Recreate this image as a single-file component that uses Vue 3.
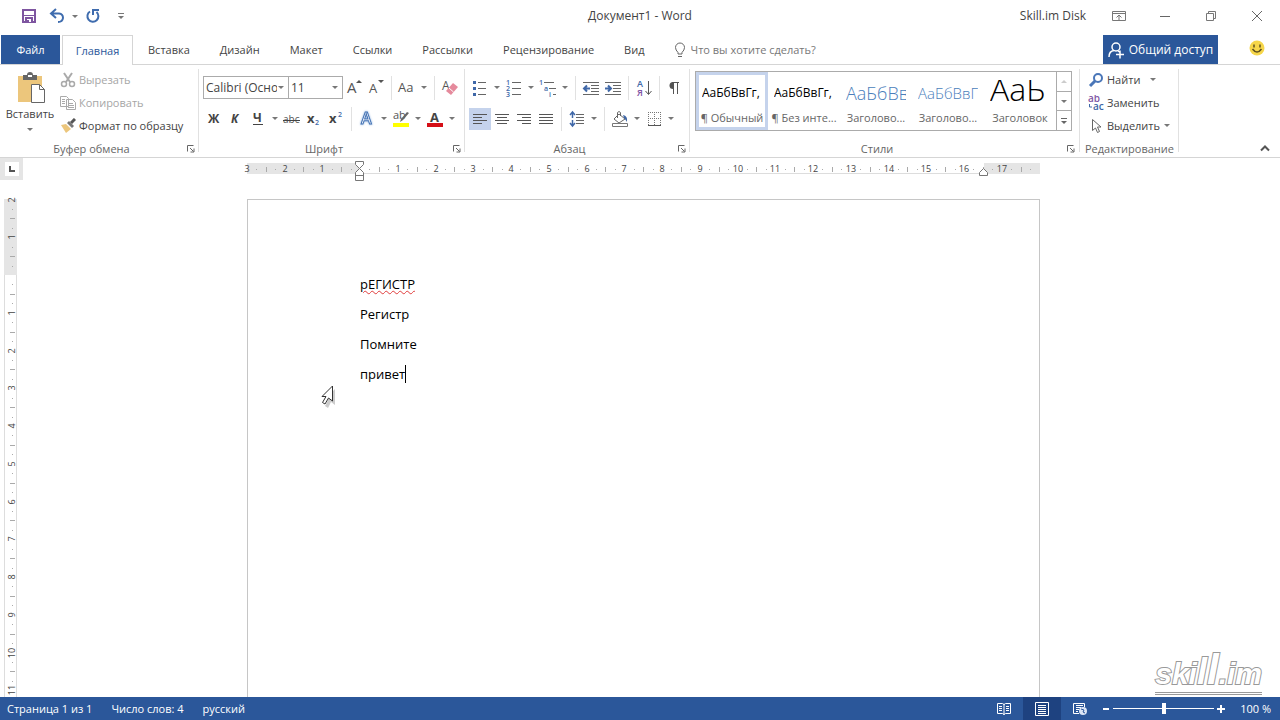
<script setup>
import { ref } from 'vue';

const tabs = ['Вставка', 'Дизайн', 'Макет', 'Ссылки', 'Рассылки', 'Рецензирование', 'Вид'];

const fontTools = [
  { id: 'grow', label: 'Увеличить размер шрифта' },
  { id: 'shrink', label: 'Уменьшить размер шрифта' },
  { sep: true },
  { id: 'case', label: 'Регистр', menu: true },
  { sep: true },
  { id: 'eraser', label: 'Удалить все форматирование' },
];

const formatTools = [
  { id: 'bold', label: 'Полужирный' },
  { id: 'italic', label: 'Курсив' },
  { id: 'underline', label: 'Подчеркнутый', menu: true },
  { id: 'strike', label: 'Зачеркнутый' },
  { id: 'sub', label: 'Подстрочный знак' },
  { id: 'sup', label: 'Надстрочный знак' },
  { sep: true },
  { id: 'effects', label: 'Текстовые эффекты', menu: true },
  { id: 'highlight', label: 'Цвет выделения', menu: true },
  { id: 'color', label: 'Цвет шрифта', menu: true },
];

const listTools = [
  { id: 'bullets', label: 'Маркеры', menu: true },
  { id: 'numbers', label: 'Нумерация', menu: true },
  { id: 'multilevel', label: 'Многоуровневый список', menu: true },
  { sep: true },
  { id: 'outdent', label: 'Уменьшить отступ' },
  { id: 'indent', label: 'Увеличить отступ' },
  { sep: true },
  { id: 'sort', label: 'Сортировка' },
  { sep: true },
  { id: 'pilcrow', label: 'Отобразить все знаки' },
];

const alignTools = [
  { id: 'left', label: 'По левому краю', active: true },
  { id: 'center', label: 'По центру' },
  { id: 'right', label: 'По правому краю' },
  { id: 'justify', label: 'По ширине' },
  { sep: true },
  { id: 'spacing', label: 'Интервал', menu: true },
  { sep: true },
  { id: 'fill', label: 'Заливка', menu: true },
  { id: 'borders', label: 'Границы', menu: true },
];

// letters that are part of the tool icons
const glyphs = {
  grow: [{ t: 'A', x: 3, y: 15, size: 15 }],
  shrink: [{ t: 'A', x: 3, y: 15, size: 13 }],
  case: [{ t: 'Aa', x: 1, y: 14, size: 13 }],
  eraser: [{ t: 'A', x: 2, y: 12, size: 12 }],
  bold: [{ t: 'Ж', x: 4, y: 14, size: 12, cls: 'heavy' }],
  italic: [{ t: 'К', x: 5, y: 14, size: 12, cls: 'heavy slanted' }],
  underline: [{ t: 'Ч', x: 5, y: 13, size: 12, cls: 'heavy' }],
  strike: [{ t: 'abc', x: 1, y: 14, size: 10 }],
  sub: [{ t: 'x', x: 3, y: 14, size: 13, cls: 'heavy' }, { t: '2', x: 11, y: 16, size: 7, cls: 'blue' }],
  sup: [{ t: 'x', x: 3, y: 14, size: 13, cls: 'heavy' }, { t: '2', x: 12, y: 8, size: 7, cls: 'blue' }],
  effects: [{ t: 'A', x: 4, y: 15, size: 16, cls: 'glow' }],
  highlight: [{ t: 'ab', x: 2, y: 10, size: 11 }],
  color: [{ t: 'A', x: 5, y: 13, size: 13, cls: 'heavy' }],
  numbers: [
    { t: '1', x: 2, y: 7, size: 7, cls: 'blue' },
    { t: '2', x: 2, y: 13, size: 7, cls: 'blue' },
    { t: '3', x: 2, y: 19, size: 7, cls: 'blue' },
  ],
  multilevel: [
    { t: '1', x: 1, y: 7, size: 7, cls: 'blue' },
    { t: 'a', x: 6, y: 13, size: 7, cls: 'blue' },
    { t: 'i', x: 11, y: 19, size: 7, cls: 'blue' },
  ],
  sort: [
    { t: 'А', x: 3, y: 9, size: 9, cls: 'blue' },
    { t: 'Я', x: 3, y: 18, size: 9, cls: 'purple' },
  ],
};

const styles = [
  { name: '¶ Обычный', sample: 'АаБбВвГг,', kind: 'normal' },
  { name: '¶ Без инте...', sample: 'АаБбВвГг,', kind: 'normal' },
  { name: 'Заголово...', sample: 'АаБбВв', kind: 'h1' },
  { name: 'Заголово...', sample: 'АаБбВвГ', kind: 'h2' },
  { name: 'Заголовок', sample: 'АаЬ', kind: 'title' },
];
const activeStyle = ref(0);
const zoom = ref(100);

// one centimetre on the rulers, in px at 100 %
const CM = 37.75;

function marks(from, to, min, max) {
  const out = [];
  for (let i = from * 4; i <= to * 4; i++) {
    const pos = Math.round((i * CM) / 4);
    if (i === 0 || pos < min || pos > max) continue;
    const type = i % 4 === 0 ? 'num' : i % 2 === 0 ? 'tick' : 'dot';
    out.push({ pos, type, text: Math.abs(i / 4) });
  }
  return out;
}

const hMarks = marks(-3, 18, -114, 672);
const vMarks = marks(-2, 11, -76, 420);
</script>

<template>
  <div class="word">
    <svg class="sprite" aria-hidden="true">
      <symbol id="arrow" viewBox="0 0 8 5"><path d="M1 1h6L4 4z" fill="#777" /></symbol>
      <symbol id="launcher" viewBox="0 0 8 8">
        <path d="M.5 6.500V.5h6M3 3l3.500 3.500M7 3.500V7H3.500" fill="none" stroke="#666" />
      </symbol>
      <symbol id="grow" viewBox="0 0 20 20"><path d="M12 5l3-3 3 3z" fill="#555" /></symbol>
      <symbol id="shrink" viewBox="0 0 20 20"><path d="M12 2l3 3 3-3z" fill="#555" /></symbol>
      <symbol id="eraser" viewBox="0 0 20 20">
        <path d="M13 5l5 4-7 8-5-4z" fill="#e58a9c" /><path d="M9 10l4.500 4" stroke="#fff" />
      </symbol>
      <symbol id="underline" viewBox="0 0 20 20"><path d="M5 15.500h10" stroke="#444" /></symbol>
      <symbol id="strike" viewBox="0 0 20 20"><path d="M1 11.500h17" stroke="#444" /></symbol>
      <symbol id="highlight" viewBox="0 0 20 20">
        <path d="M18 4l-6 7-3 2 1-3 6-7z" fill="#666" /><path d="M2 14h16v4H2z" fill="#ffff00" />
      </symbol>
      <symbol id="color" viewBox="0 0 20 20"><path d="M2 14h16v4H2z" fill="#d50f17" /></symbol>
      <symbol id="bullets" viewBox="0 0 20 20">
        <path d="M8 4.500h8M8 10.500h8M8 16.500h8" stroke="#666" /><path d="M3 3h3v3H3zM3 9h3v3H3zM3 15h3v3H3z" fill="#4068a8" />
      </symbol>
      <symbol id="numbers" viewBox="0 0 20 20"><path d="M8 4.500h9M8 10.500h9M8 16.500h9" stroke="#666" /></symbol>
      <symbol id="multilevel" viewBox="0 0 20 20"><path d="M6 4.500h10M11 10.500h7M15 16.500h3" stroke="#666" /></symbol>
      <symbol id="outdent" viewBox="0 0 20 20">
        <path d="M2 4.500h16M10 7.500h8M10 10.500h8M10 13.500h8M2 16.500h16" stroke="#666" />
        <path d="M9 10.500H4M6 7.500l-3 3 3 3" fill="none" stroke="#4068a8" stroke-width="2" />
      </symbol>
      <symbol id="indent" viewBox="0 0 20 20">
        <path d="M2 4.500h16M10 7.500h8M10 10.500h8M10 13.500h8M2 16.500h16" stroke="#666" />
        <path d="M2 10.500h5M5 7.500l3 3-3 3" fill="none" stroke="#4068a8" stroke-width="2" />
      </symbol>
      <symbol id="sort" viewBox="0 0 20 20">
        <path d="M14.500 3v13M11.500 13l3 3.500 3-3.500" fill="none" stroke="#555" />
      </symbol>
      <symbol id="pilcrow" viewBox="0 0 20 20">
        <path d="M8 4a3.500 3.500 0 0 0 0 7z" fill="#555" /><path d="M8.500 16V4.500M12.500 16V4.500M7 4.500h7" stroke="#555" />
      </symbol>
      <symbol id="left" viewBox="0 0 20 20"><path d="M3 5.500h14M3 8.500h9M3 11.500h14M3 14.500h9" stroke="#555" /></symbol>
      <symbol id="center" viewBox="0 0 20 20"><path d="M3 5.500h14M5 8.500h10M3 11.500h14M5 14.500h10" stroke="#555" /></symbol>
      <symbol id="right" viewBox="0 0 20 20"><path d="M3 5.500h14M8 8.500h9M3 11.500h14M8 14.500h9" stroke="#555" /></symbol>
      <symbol id="justify" viewBox="0 0 20 20"><path d="M3 5.500h14M3 8.500h14M3 11.500h14M3 14.500h14" stroke="#555" /></symbol>
      <symbol id="spacing" viewBox="0 0 20 20">
        <path d="M9 5.500h8M9 8.500h8M9 11.500h8M9 14.500h8" stroke="#666" />
        <path d="M5.500 3v6M3 6l2.500-3L8 6M5.500 11v6M3 14l2.500 3L8 14" fill="none" stroke="#4068a8" stroke-width="1.500" />
      </symbol>
      <symbol id="fill" viewBox="0 0 20 20">
        <path d="M9 5l6 5-6 4-5-4zM7.500 9V3.500q1.500-2 3 0V7" fill="#fff" stroke="#666" />
        <path d="M13 6q5 1 4 7-2-3-3-4z" fill="#4068a8" /><path d="M2.500 14.500h15v3h-15z" fill="#fff" stroke="#777" />
      </symbol>
      <symbol id="borders" viewBox="0 0 20 20">
        <path d="M4.500 3v13M10.500 3v13M16.500 3v13M4 3.500h13M4 9.500h13" stroke="#777" stroke-dasharray="1 1" /><path d="M4 16.500h13" stroke="#555" />
      </symbol>
      <symbol id="minimize" viewBox="0 0 14 14"><path d="M2 7.500h10" stroke="#666" /></symbol>
      <symbol id="restore" viewBox="0 0 14 14"><path d="M2.500 4.500h7v7h-7zM4.500 4V2.500h7v7H10" fill="none" stroke="#777" /></symbol>
      <symbol id="close" viewBox="0 0 14 14"><path d="M2 2l10 10M12 2L2 12" stroke="#666" /></symbol>
      <symbol id="ribbon-options" viewBox="0 0 14 14">
        <path d="M.5 2.500h13v9H.5zM1 4.500h12M7 11V6M4.500 8.500L7 6l2.500 2.500" fill="none" stroke="#777" />
      </symbol>
    </svg>

    <header class="titlebar">
      <div class="quick">
        <button class="quick-btn spaced" aria-label="Сохранить">
          <svg width="16" height="16" viewBox="0 0 16 16">
            <path d="M2 2h12v12H2z" fill="#fff" stroke="#7e55a0" stroke-width="2" /><path d="M3 7.500h10" stroke="#7e55a0" /><path d="M4 9h8v5H4z" fill="#7e55a0" /><path d="M6 11h4v3H8v-2H6z" fill="#fff" />
          </svg>
        </button>
        <button class="quick-btn" aria-label="Отменить">
          <svg width="16" height="16" viewBox="0 0 16 16">
            <path d="M7 1L2 5.500 7 10M2.500 5.500H10q4 .5 4 4.500-.5 4-5 4" fill="none" stroke="#3f6cae" stroke-width="2" />
          </svg>
        </button>
        <button class="drop" aria-label="Список отмены"><svg width="8" height="5"><use href="#arrow" /></svg></button>
        <button class="quick-btn spaced" aria-label="Повторить">
          <svg width="16" height="16" viewBox="0 0 16 16">
            <path d="M5 3.500A5.500 5.500 0 1 0 11.500 4M8 7V2h6" fill="none" stroke="#3f6cae" stroke-width="2" />
          </svg>
        </button>
        <button class="quick-btn" aria-label="Настройка панели быстрого доступа">
          <svg width="8" height="8" viewBox="0 0 8 8"><path d="M1 1.500h6" stroke="#777" /><path d="M1 4h6L4 7z" fill="#777" /></svg>
        </button>
      </div>
      <span class="title">Документ1 - Word</span>
      <div class="window">
        <span class="account">Skill.im Disk</span>
        <button v-for="b in ['ribbon-options', 'minimize', 'restore', 'close']" :key="b" class="win-btn" :aria-label="b">
          <svg width="14" height="14"><use :href="'#' + b" /></svg>
        </button>
      </div>
    </header>

    <nav class="tabs">
      <button class="tab file">Файл</button>
      <button class="tab active">Главная</button>
      <button v-for="t in tabs" :key="t" class="tab">{{ t }}</button>
      <label class="tell">
        <svg width="12" height="16" viewBox="0 0 12 16">
          <path d="M4 10.500Q1.500 8 1.500 5.500a4.500 4.500 0 0 1 9 0Q10.500 8 8 10.500V12H4zM4 14.500h4" fill="none" stroke="#666" />
        </svg>
        <input type="text" placeholder="Что вы хотите сделать?" aria-label="Что вы хотите сделать?">
      </label>
      <button class="share">
        <svg width="17" height="18" viewBox="0 0 17 18">
          <g fill="none" stroke="#fff" stroke-width="1.500"><circle cx="8" cy="6" r="4" /><path d="M1 16q0-6 5-6.500M10 10l1.500 1M8 13.500h8M12 9.500v8" /></g>
        </svg>
        Общий доступ
      </button>
      <button class="smile" aria-label="Отзыв">
        <svg width="16" height="16" viewBox="0 0 16 16">
          <circle cx="8" cy="8" r="7.500" fill="#f6d64a" /><path d="M5 4.500v3M11 4.500v3M3.500 9q4.500 6 9 0" fill="none" stroke="#5e5020" stroke-width="1.500" />
        </svg>
      </button>
    </nav>

    <section class="ribbon">
      <div class="group clipboard">
        <div class="clip-body">
          <button class="paste">
            <svg width="30" height="32" viewBox="0 0 30 32">
              <path d="M3 4h24v26H3z" fill="#ecc67c" /><path d="M8 3h4q0-3 3-3t3 3h4v5H8z" fill="#666" /><path d="M13 3h4v2h-4z" fill="#fff" />
              <path d="M16.500 12.500h8l5 5v13h-13z" fill="#fff" stroke="#666" /><path d="M24.500 12.500v5h5" fill="none" stroke="#666" />
            </svg>
            <span>Вставить</span>
            <svg class="below" width="8" height="5"><use href="#arrow" /></svg>
          </button>
          <div class="stack">
            <button class="line off">
              <svg width="16" height="16" viewBox="0 0 16 16">
                <path d="M4 1l6 9M12 1L6 10" stroke="#aaa" stroke-width="2" /><g fill="none" stroke="#aaa" stroke-width="1.500"><circle cx="4" cy="12" r="2.500" /><circle cx="12" cy="12" r="2.500" /></g>
              </svg>Вырезать
            </button>
            <button class="line off">
              <svg width="16" height="16" viewBox="0 0 16 16">
                <path d="M.5 1.500h6l2 2v8h-8zM6.500 4.500h6l3 3v7h-9z" fill="#fff" stroke="#aaa" /><path d="M2 4.500h3M2 6.500h3M2 8.500h3M8 8.500h5M8 10.500h6M8 12.500h6" stroke="#aaa" />
              </svg>Копировать
            </button>
            <button class="line">
              <svg width="16" height="16" viewBox="0 0 16 16">
                <path d="M1 7l5-1 5 5-5 4z" fill="#ecc67c" /><path d="M7 5l2-2 5 5-2 2z" fill="#777" /><path d="M11 5l4-4" stroke="#555" stroke-width="3" />
              </svg>Формат по образцу
            </button>
          </div>
        </div>
        <div class="caption"><span>Буфер обмена</span><button class="launch" aria-label="Буфер обмена"><svg width="8" height="8"><use href="#launcher" /></svg></button></div>
      </div>

      <div class="group font">
        <div v-for="(row, r) in [fontTools, formatTools]" :key="r" class="row">
          <template v-if="r === 0">
            <label class="combo name"><select aria-label="Шрифт"><option>Calibri (Основной текст)</option></select><svg width="8" height="5"><use href="#arrow" /></svg></label>
            <label class="combo size"><select aria-label="Размер шрифта"><option>11</option></select><svg width="8" height="5"><use href="#arrow" /></svg></label>
          </template>
          <template v-for="(t, i) in row" :key="i">
            <i v-if="t.sep" class="sep"></i>
            <template v-else>
              <button class="tool" :aria-label="t.label">
                <svg width="20" height="20">
                  <text v-for="g in glyphs[t.id]" :key="g.t" :x="g.x" :y="g.y" :font-size="g.size" :class="g.cls">{{ g.t }}</text>
                  <use :href="'#' + t.id" />
                </svg>
              </button>
              <button v-if="t.menu" class="drop" :aria-label="t.label"><svg width="8" height="5"><use href="#arrow" /></svg></button>
            </template>
          </template>
        </div>
        <div class="caption"><span>Шрифт</span><button class="launch" aria-label="Шрифт"><svg width="8" height="8"><use href="#launcher" /></svg></button></div>
      </div>

      <div class="group para">
        <div v-for="(row, r) in [listTools, alignTools]" :key="r" class="row">
          <template v-for="(t, i) in row" :key="i">
            <i v-if="t.sep" class="sep"></i>
            <template v-else>
              <button class="tool" :class="{ active: t.active }" :aria-label="t.label">
                <svg width="20" height="20">
                  <text v-for="g in glyphs[t.id]" :key="g.t" :x="g.x" :y="g.y" :font-size="g.size" :class="g.cls">{{ g.t }}</text>
                  <use :href="'#' + t.id" />
                </svg>
              </button>
              <button v-if="t.menu" class="drop" :aria-label="t.label"><svg width="8" height="5"><use href="#arrow" /></svg></button>
            </template>
          </template>
        </div>
        <div class="caption"><span>Абзац</span><button class="launch" aria-label="Абзац"><svg width="8" height="8"><use href="#launcher" /></svg></button></div>
      </div>

      <div class="group styles">
        <div class="gallery">
          <button v-for="(s, i) in styles" :key="i" class="style" :class="{ active: i === activeStyle }" @click="activeStyle = i">
            <span class="sample" :class="s.kind">{{ s.sample }}</span>
            <span class="style-name">{{ s.name }}</span>
          </button>
          <div class="spin">
            <button aria-label="Вверх" disabled><svg width="8" height="5" viewBox="0 0 8 5"><path d="M1 4h6L4 1z" fill="#ccc" /></svg></button>
            <button aria-label="Вниз"><svg width="8" height="5"><use href="#arrow" /></svg></button>
            <button aria-label="Все стили"><svg width="8" height="8" viewBox="0 0 8 8"><path d="M1 1.500h6" stroke="#666" /><path d="M1 4h6L4 7z" fill="#666" /></svg></button>
          </div>
        </div>
        <div class="caption"><span>Стили</span><button class="launch" aria-label="Стили"><svg width="8" height="8"><use href="#launcher" /></svg></button></div>
      </div>

      <div class="group editing">
        <div class="stack">
          <button class="line">
            <svg width="16" height="16" viewBox="0 0 16 16"><circle cx="10" cy="6" r="4" fill="none" stroke="#4a76b8" stroke-width="2" /><path d="M7 9l-5 5" stroke="#4a76b8" stroke-width="3" /></svg>
            Найти
            <svg class="far" width="8" height="5"><use href="#arrow" /></svg>
          </button>
          <button class="line">
            <svg width="16" height="16" viewBox="0 0 16 16">
              <text x="0" y="7" font-size="10" class="purple">ab</text><text x="5" y="15" font-size="10" class="blue">ac</text><path d="M1.500 9v3H4" fill="none" stroke="#4068a8" />
            </svg>
            Заменить
          </button>
          <button class="line">
            <svg width="16" height="16" viewBox="0 0 16 16"><path d="M4.500 1.500v11l3-2.500 2 4.500 2-1-2-4.500h3.500z" fill="#fff" stroke="#666" /></svg>
            Выделить<svg width="8" height="5"><use href="#arrow" /></svg>
          </button>
        </div>
        <div class="caption"><span>Редактирование</span></div>
      </div>
      <button class="collapse" aria-label="Свернуть ленту">
        <svg width="10" height="7" viewBox="0 0 10 7"><path d="M1 5.500l4-4 4 4" fill="none" stroke="#555" stroke-width="2" /></svg>
      </button>
    </section>

    <main class="work">
      <div class="corner">
        <button aria-label="Табуляция"><svg width="6" height="6" viewBox="0 0 6 6"><path d="M1 0v5h5" fill="none" stroke="#555" stroke-width="2" /></svg></button>
      </div>
      <div class="hruler">
        <svg width="793" height="22" viewBox="-113 0 793 22">
          <path d="M-113 5h793v11h-793z" fill="#e5e5e5" /><path d="M0 5h624v11H0z" fill="#fff" /><path d="M0 15.500h624" stroke="#ddd" />
          <template v-for="m in hMarks" :key="m.pos">
            <text v-if="m.type === 'num'" :x="m.pos" y="14" text-anchor="middle">{{ m.text }}</text>
            <rect v-else-if="m.type === 'tick'" :x="m.pos" y="9" width="1" height="5" />
            <rect v-else :x="m.pos" y="11" width="1" height="1" />
          </template>
          <g fill="#fff" stroke="#777">
            <path d="M-4.500 3.500h8v3l-4 4 4 4v8h-8v-8l4-4-4-4zM-4.500 17.500h8" /><path d="M619.500 17.500v-3l4-4 4 4v3z" />
          </g>
        </svg>
      </div>
      <div class="vruler">
        <svg width="13" height="1000" viewBox="0 -76 13 1000">
          <path d="M0-76h13V0H0z" fill="#e5e5e5" /><path d="M.5 0v1000M12.500 0v1000" stroke="#ddd" />
          <template v-for="m in vMarks" :key="m.pos">
            <text v-if="m.type === 'num'" :transform="`translate(11 ${m.pos}) rotate(-90)`" text-anchor="middle">{{ m.text }}</text>
            <rect v-else-if="m.type === 'tick'" x="6" :y="m.pos" width="5" height="1" />
            <rect v-else x="8" :y="m.pos" width="1" height="1" />
          </template>
        </svg>
      </div>
      <div class="canvas">
        <article class="page">
          <p><span class="misspelt">рЕГИСТР</span></p>
          <p>Регистр</p>
          <p>Помните</p>
          <p><span class="caret">привет</span></p>
          <svg class="pointer" width="18" height="24" viewBox="0 0 18 24">
            <path d="M14 4v16l-4-3-3 6-3-2 3-6H3z" fill="#ccc" />
            <path d="M11.500 1v15l-4-3-3.500 6-2.500-1.500L5 11.500H1z" fill="#fff" stroke="#333" />
          </svg>
        </article>
      </div>
      <div class="brand">
        <span class="brand-text">ski<span class="tall">l</span><span class="taller">l</span>.im</span>
      </div>
    </main>

    <footer class="status">
      <span>Страница 1 из 1</span>
      <span>Число слов: 4</span>
      <span>русский</span>
      <div class="views">
        <button class="view" aria-label="Режим чтения">
          <svg width="14" height="14" viewBox="0 0 14 14"><path d="M.5 1.500h5l1.500 1 1.500-1h5v10h-5l-1.500 1-1.500-1h-5zM7 2v11M2 4.500h3M2 6.500h3M2 8.500h3M9 4.500h3M9 6.500h3M9 8.500h3" fill="none" stroke="#fff" /></svg>
        </button>
        <button class="view active" aria-label="Разметка страницы">
          <svg width="14" height="14" viewBox="0 0 14 14"><path d="M.5.500h13v13H.5zM3 3.500h8M3 5.500h8M3 7.500h8M3 9.500h8M3 11.500h8" fill="none" stroke="#fff" /></svg>
        </button>
        <button class="view" aria-label="Веб-документ">
          <svg width="14" height="14" viewBox="0 0 14 14"><path d="M6 11.500H.5V1.500h11V5M3 3.500h7M3 5.500h5M3 7.500h3M3 9.500h2" fill="none" stroke="#fff" /><circle cx="10" cy="9" r="4" fill="#dbe5f5" /><path d="M8 7l3 1-1 2 2 1" fill="none" stroke="#2b579a" /></svg>
        </button>
        <button class="step" aria-label="Уменьшить"><svg width="8" height="8" viewBox="0 0 8 8"><path d="M1 4h6" stroke="#fff" stroke-width="2" /></svg></button>
        <input v-model="zoom" type="range" min="0" max="200" aria-label="Масштаб">
        <button class="step" aria-label="Увеличить"><svg width="8" height="8" viewBox="0 0 8 8"><path d="M0 4h8M4 0v8" stroke="#fff" stroke-width="2" /></svg></button>
        <button class="percent">{{ zoom }} %</button>
      </div>
    </footer>
  </div>
</template>

<style>
body {
  margin: 0;
  background: #fff;
}
</style>

<style scoped>
.word {
  height: 100vh;
  display: flex;
  flex-direction: column;
  overflow: hidden;
  font: 11px/16px "Open Sans", "Noto Sans", sans-serif;
  color: #444;
}

.sprite {
  position: absolute;
  width: 0;
  height: 0;
}

button,
input,
select {
  font: inherit;
  color: inherit;
  background: none;
  border: 0;
  padding: 0;
  margin: 0;
  border-radius: 0;
}

button {
  display: flex;
  align-items: center;
  justify-content: center;
  flex: none;
  white-space: nowrap;
}

svg {
  flex: none;
}

/* title bar */
.titlebar {
  display: grid;
  grid-template-columns: 1fr auto 1fr;
  height: 35px;
  flex: none;
  font-size: 12px;
}

.quick {
  display: flex;
  align-items: center;
  height: 32px;
  padding-left: 17px;
}

.quick-btn {
  width: 24px;
  height: 24px;
}

.quick-btn.spaced {
  margin-right: 4px;
}

.drop {
  width: 12px;
  height: 22px;
}

.title {
  line-height: 32px;
}

.window {
  display: flex;
  justify-content: flex-end;
  height: 31px;
}

.account {
  line-height: 32px;
  margin-right: 10px;
}

.win-btn {
  width: 46px;
}

/* tabs */
.tabs {
  display: flex;
  height: 30px;
  flex: none;
  box-sizing: border-box;
  border-bottom: 1px solid #d5d5d5;
  padding-left: 1px;
}

.tab {
  padding: 0 15px;
}

.tab.file {
  width: 59px;
  margin-right: 2px;
  background: #2b579a;
  color: #fff;
}

.tab.active {
  box-sizing: border-box;
  width: 71px;
  height: 30px;
  background: #fff;
  border: 1px solid #d5d5d5;
  border-bottom: 0;
  color: #2b579a;
}

.tell {
  display: flex;
  align-items: center;
  gap: 5px;
  margin: 0 auto 0 14px;
}

.tell input {
  width: 150px;
}

.tell input::placeholder {
  color: #777;
  opacity: 1;
}

.share {
  width: 115px;
  gap: 4px;
  background: #2b579a;
  color: #fff;
  font-size: 12px;
}

.smile {
  margin: 0 15px 4px 31px;
}

/* ribbon */
.ribbon {
  display: flex;
  height: 93px;
  flex: none;
  box-sizing: border-box;
  border-bottom: 1px solid #d5d5d5;
}

.group {
  box-sizing: border-box;
  display: flex;
  flex-direction: column;
  flex: none;
  padding: 3px 4px 0;
  background: linear-gradient(#e1e1e1, #e1e1e1) right 4px / 1px 83px no-repeat;
}

.group.clipboard {
  width: 199px;
}

.group.font {
  width: 266px;
  padding-top: 7px;
}

.group.para {
  width: 225px;
  padding-top: 7px;
}

.group.styles {
  width: 390px;
  padding: 6px 5px 0;
}

.group.editing {
  width: 99px;
}

.caption {
  display: flex;
  align-items: center;
  margin-top: auto;
  height: 16px;
  color: #666;
}

.caption span {
  flex: 1;
  text-align: center;
  white-space: nowrap;
}

.launch {
  width: 8px;
  height: 8px;
  margin-left: 8px;
}

.clip-body {
  display: flex;
}

.paste {
  flex-direction: column;
  justify-content: flex-start;
  width: 52px;
  gap: 2px;
  padding-top: 4px;
}

.below {
  margin-top: 3px;
}

.stack {
  display: flex;
  flex-direction: column;
  align-items: flex-start;
}

.line {
  height: 23px;
  gap: 3px;
  padding-left: 4px;
}

.line.off {
  color: #a6a6a6;
}

.far {
  margin-left: 6px;
}

.row {
  display: flex;
  align-items: center;
  height: 31px;
}

.tool {
  width: 22px;
  height: 22px;
}

.tool.active {
  background: #c5d3ec;
}

.tool text {
  fill: #555;
}

.tool .heavy {
  font-weight: 700;
  fill: #444;
}

.tool .slanted {
  font-style: italic;
}

.tool .blue,
.line .blue {
  font-weight: 600;
  fill: #4068a8;
}

.tool .purple,
.line .purple {
  font-weight: 600;
  fill: #8055a4;
}

.tool .glow {
  font-weight: 600;
  fill: #fff;
  stroke: #4472b4;
  stroke-width: 1px;
  filter: drop-shadow(0 0 1px #8fb4e0);
}

.sep {
  width: 1px;
  height: 24px;
  margin: 0 4px;
  background: #e1e1e1;
}

.combo {
  box-sizing: border-box;
  display: flex;
  align-items: center;
  height: 23px;
  border: 1px solid #ababab;
  padding-right: 3px;
  font-size: 12px;
}

.combo.name {
  width: 86px;
}

.combo.size {
  width: 55px;
  margin-left: -1px;
}

.combo select {
  flex: 1;
  min-width: 0;
  height: 21px;
  padding-left: 2px;
  appearance: none;
  overflow: hidden;
}

.gallery {
  display: flex;
  height: 60px;
  box-sizing: border-box;
  border: 1px solid #ababab;
  margin-right: 3px;
}

.style {
  flex: 1;
  min-width: 0;
  flex-direction: column;
  justify-content: flex-end;
  box-sizing: border-box;
  border: 3px solid transparent;
}

.style.active {
  border-color: #c5d3ec;
}

.sample {
  width: 60px;
  height: 29px;
  line-height: 26px;
  overflow: hidden;
  text-align: left;
  font-size: 12px;
  color: #000;
}

.sample.h1 {
  font-size: 18px;
  font-weight: 300;
  color: #4a7ebb;
}

.sample.h2 {
  font-size: 15px;
  font-weight: 300;
  color: #4a7ebb;
}

.sample.title {
  font-size: 32px;
  font-weight: 300;
  line-height: 18px;
}

.style-name {
  line-height: 18px;
  color: #666;
}

.spin {
  display: flex;
  flex-direction: column;
  width: 14px;
  border-left: 1px solid #ababab;
}

.spin button {
  flex: 1;
}

.spin button + button {
  border-top: 1px solid #ababab;
}

.collapse {
  margin: auto 10px 5px auto;
}

/* rulers and page */
.work {
  position: relative;
  flex: 1;
  min-height: 0;
  display: grid;
  grid-template-columns: 23px 1fr;
  grid-template-rows: 22px 1fr;
  overflow: hidden;
}

.corner {
  display: flex;
  align-items: center;
  justify-content: center;
  background: #e5e5e5;
}

.corner button {
  width: 14px;
  height: 14px;
  background: #fff;
}

.hruler {
  display: flex;
  justify-content: center;
  padding-right: 16px;
}

.hruler svg,
.vruler svg {
  overflow: visible;
}

.hruler text,
.vruler text {
  font-size: 9px;
  fill: #444;
}

.hruler rect,
.vruler rect {
  fill: #aaa;
}

.vruler {
  min-height: 0;
  overflow: hidden;
  padding: 19px 0 0 4px;
}

.canvas {
  display: flex;
  justify-content: center;
  min-height: 0;
  padding: 19px 16px 0 0;
  overflow: hidden;
}

.page {
  position: relative;
  box-sizing: border-box;
  width: 793px;
  height: 1122px;
  border: 1px solid #c6c6c6;
  padding: 73px 112px;
  font-size: 13px;
  line-height: 22px;
  color: #000;
}

.page p {
  margin: 0 0 8px;
}

.misspelt {
  text-decoration: underline wavy #e03c3c 1px;
  text-underline-offset: 1px;
}

.caret {
  border-right: 1px solid #000;
}

.pointer {
  position: absolute;
  left: 73px;
  top: 185px;
}

.brand {
  position: absolute;
  right: 18px;
  bottom: 2px;
  border-bottom: 3px double #999;
}

.brand-text {
  display: block;
  font: italic 700 30px/36px "Liberation Sans", sans-serif;
  color: #fff;
  -webkit-text-stroke: 2px #999;
  paint-order: stroke fill;
}

.tall {
  font-size: 36px;
}

.taller {
  font-size: 42px;
}

/* status bar */
.status {
  display: flex;
  align-items: center;
  gap: 19px;
  height: 23px;
  flex: none;
  padding: 0 9px 0 7px;
  background: #2b579a;
  color: #fff;
}

.views {
  display: flex;
  align-items: center;
  height: 23px;
  margin-left: auto;
}

.view {
  width: 38px;
  height: 23px;
}

.view.active {
  background: #1e4280;
}

.step {
  width: 14px;
  height: 22px;
}

.views input {
  appearance: none;
  width: 101px;
  height: 11px;
  background: linear-gradient(#fff, #fff) center / 100% 1px no-repeat;
}

.views input::-webkit-slider-thumb {
  appearance: none;
  width: 4px;
  height: 11px;
  background: #fff;
}

.percent {
  margin-left: 12px;
}
</style>
